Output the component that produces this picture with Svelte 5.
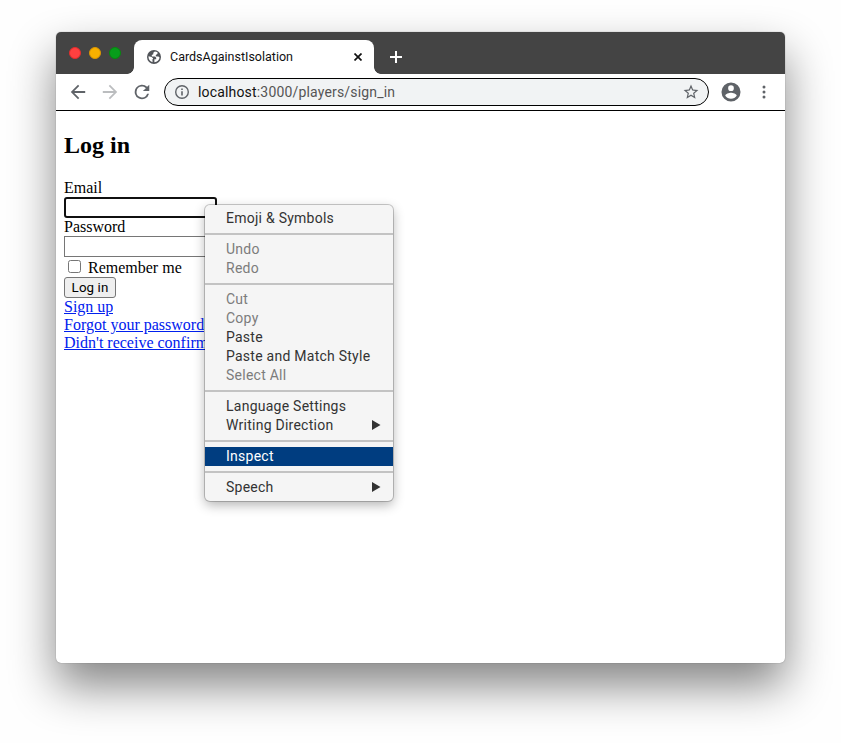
<script>
  const groups = [
    [{ label: 'Emoji & Symbols' }],
    [{ label: 'Undo', off: true }, { label: 'Redo', off: true }],
    [
      { label: 'Cut', off: true },
      { label: 'Copy', off: true },
      { label: 'Paste' },
      { label: 'Paste and Match Style' },
      { label: 'Select All', off: true }
    ],
    [{ label: 'Language Settings' }, { label: 'Writing Direction', sub: true }],
    [{ label: 'Inspect', active: true }],
    [{ label: 'Speech', sub: true }]
  ];
  const links = ['Sign up', 'Forgot your password', "Didn't receive confirm"];
</script>

<div class="desktop">
  <div class="window">
    <div class="titlebar">
      <div class="lights"><i class="red"></i><i class="yellow"></i><i class="green"></i></div>
      <div class="tab">
        <svg class="globe" width="14" height="14" viewBox="0 0 14 14">
          <circle cx="7" cy="7" r="7" fill="#515459" />
          <path d="M7.800 1.600 6.300 2.800v1.400L4.800 5v1.500h3.400l1 1.200v1.600H7.400v2.900c2.700-.1 4.900-2.100 5.200-4.700L11.400 6.400H9.300L8.600 5.200l1.900-1.500V2.300C9.700 1.800 8.700 1.600 7.800 1.600Z" fill="#fff" />
          <path d="M1.500 6.300c-.2 2.900 1.300 5.200 4 5.900V10.300L4.500 9.500H6V8.300L4.600 7Z" fill="#fff" />
        </svg>
        <span class="tab-title">CardsAgainstIsolation</span>
        <svg class="close" width="8" height="8" viewBox="0 0 8 8"><path d="M.5.5l7 7M7.500.5l-7 7" stroke="#111" stroke-width="1.700" /></svg>
      </div>
      <svg class="plus" width="12" height="12" viewBox="0 0 12 12"><path d="M6 0v12M0 6h12" stroke="#fff" stroke-width="2" /></svg>
    </div>

    <div class="toolbar">
      <svg width="18" height="18" viewBox="2 2 20 20" fill="#5f6368"><path d="M20 11H7.830l5.590-5.590L12 4l-8 8 8 8 1.410-1.410L7.830 13H20z" /></svg>
      <svg class="fwd" width="18" height="18" viewBox="2 2 20 20" fill="#bbbdbf"><path d="M4 11h12.170l-5.590-5.590L12 4l8 8-8 8-1.410-1.410L16.170 13H4z" /></svg>
      <svg class="reload" width="20" height="20" viewBox="1 1 22 22" fill="#5f6368"><path d="M17.650 6.350A8 8 0 1 0 19.730 14h-2.080A6 6 0 1 1 12 6c1.660 0 3.140.69 4.220 1.780L13 11h7V4z" /></svg>
      <div class="omnibox">
        <svg width="14" height="14" viewBox="0 0 14 14"><circle cx="7" cy="7" r="6.300" fill="none" stroke="#5f6368" stroke-width="1.400" /><path d="M7 6.200v4.300M7 3.400v1.600" stroke="#5f6368" stroke-width="1.600" /></svg>
        <span class="url"><b>localhost</b>:3000/players/sign_in</span>
        <svg class="star" width="16" height="16" viewBox="1.200 1.200 21.600 21.600" fill="#5f6368"><path d="M22 9.240l-7.190-.62L12 2 9.190 8.630 2 9.240l5.460 4.730L5.820 21 12 17.270 18.180 21l-1.630-7.030L22 9.240zM12 15.400l-3.760 2.270 1-4.280-3.320-2.880 4.380-.38L12 6.100l1.710 4.040 4.380.38-3.320 2.880 1 4.280L12 15.400z" /></svg>
      </div>
      <svg class="avatar" width="20" height="20" viewBox="1.500 1.500 21 21" fill="#5f6368"><path d="M12 2a10 10 0 1 0 0 20 10 10 0 0 0 0-20zm0 3a3 3 0 1 1 0 6 3 3 0 0 1 0-6zm0 14.200a7.200 7.200 0 0 1-6-3.220c.03-1.990 4-3.080 6-3.080s5.970 1.090 6 3.080a7.200 7.200 0 0 1-6 3.220z" /></svg>
      <svg class="dots" width="4" height="14" viewBox="0 0 4 14" fill="#5f6368"><circle cx="2" cy="2" r="1.500" /><circle cx="2" cy="7" r="1.500" /><circle cx="2" cy="12" r="1.500" /></svg>
    </div>

    <main>
      <h2>Log in</h2>
      <div class="line">Email</div>
      <div class="field focused"></div>
      <div class="line">Password</div>
      <div class="field"></div>
      <div class="remember"><span class="check"></span>Remember me</div>
      <button>Log in</button>
      {#each links as link}
        <div class="line clipped"><span class="link">{link}</span></div>
      {/each}
    </main>
  </div>

  <div class="menu">
    {#each groups as group}
      <div class="group">
        {#each group as item}
          <div class="item" class:off={item.off} class:active={item.active}>
            <span>{item.label}</span>
            {#if item.sub}
              <svg width="9" height="10" viewBox="0 0 9 10"><path d="M0 0l8.500 5L0 10z" fill="#333" /></svg>
            {/if}
          </div>
        {/each}
      </div>
    {/each}
  </div>
</div>

<style>
  .desktop {
    position: relative;
    box-sizing: border-box;
    width: 841px;
    height: 743px;
    padding: 32px 56px;
    overflow: hidden;
    background: #fefefe;
  }
  svg { display: block; flex: none; }
  .window {
    width: 729px;
    height: 631px;
    border-radius: 5px;
    background: #fff;
    box-shadow: 0 0 1px rgba(0, 0, 0, 0.5), 0 23px 46px rgba(0, 0, 0, 0.48);
  }
  .titlebar {
    display: flex;
    height: 42px;
    border-radius: 5px 5px 0 0;
    background: #444;
  }
  .lights {
    display: flex;
    gap: 8px;
    width: 65px;
    padding: 15px 0 0 13px;
  }
  .lights i {
    box-sizing: border-box;
    width: 12px;
    height: 12px;
    border-radius: 50%;
  }
  .red { background: #ff4040; border: 1px solid #e52c2c; }
  .yellow { background: #f8b000; border: 1px solid #dc9600; }
  .green { background: #079d1b; border: 1px solid #078710; }
  .tab {
    position: relative;
    display: flex;
    align-items: center;
    box-sizing: border-box;
    width: 240px;
    height: 34px;
    margin-top: 8px;
    padding: 0 12px 0 13px;
    border-radius: 8px 8px 0 0;
    background: #fff;
  }
  .tab::before,
  .tab::after {
    content: '';
    position: absolute;
    bottom: 0;
    width: 7px;
    height: 7px;
  }
  .tab::before { left: -7px; background: radial-gradient(circle at 0 0, #444 6.500px, #fff 7.200px); }
  .tab::after { right: -7px; background: radial-gradient(circle at 100% 0, #444 6.500px, #fff 7.200px); }
  .tab-title {
    margin-left: 9px;
    font: 12.500px/16px Roboto, sans-serif;
    color: #111;
    white-space: nowrap;
  }
  .close { margin-left: auto; }
  .plus { margin: 19px 0 0 16px; }
  .toolbar {
    display: flex;
    align-items: center;
    box-sizing: border-box;
    height: 37px;
    padding-left: 13px;
    border-bottom: 1px solid #000;
  }
  .fwd { margin-left: 14px; }
  .reload { margin-left: 13px; }
  .omnibox {
    display: flex;
    align-items: center;
    box-sizing: border-box;
    width: 545px;
    height: 28px;
    margin-left: 12px;
    padding: 0 9px 0 10px;
    border: 1px solid #000;
    border-radius: 14px;
    background: #f1f3f4;
  }
  .url {
    margin-left: 9px;
    font: 14px/18px Roboto, sans-serif;
    letter-spacing: 0.170px;
    color: #555;
  }
  .url b { font-weight: 400; color: #111; }
  .star { margin-left: auto; }
  .avatar { margin-left: 12px; }
  .dots { margin-left: 20.500px; }
  main {
    display: flex;
    flex-direction: column;
    align-items: flex-start;
    padding: 21px 8px;
    font: 16px/18px 'Liberation Serif', serif;
    color: #000;
  }
  h2 { margin: 0 0 20px; font-size: 24px; line-height: 27px; }
  .line { height: 18px; white-space: nowrap; }
  .clipped { max-width: 141px; overflow: hidden; }
  .field {
    box-sizing: border-box;
    width: 153px;
    height: 21px;
    border: 1px solid #767676;
    background: #fff;
  }
  .field.focused { border: 2px solid #101010; border-radius: 3px; }
  .remember {
    display: flex;
    align-items: center;
    height: 20px;
    padding-top: 1px;
    box-sizing: border-box;
  }
  .check {
    box-sizing: border-box;
    width: 13px;
    height: 13px;
    margin: -2px 7px 0 4px;
    border: 1px solid #767676;
    border-radius: 2.500px;
  }
  button {
    box-sizing: border-box;
    width: 52px;
    height: 21px;
    margin: 0;
    padding: 0;
    border: 1px solid #767676;
    border-radius: 3px;
    background: #efefef;
    font: 13.333px/17px Roboto, sans-serif;
    letter-spacing: 0.100px;
    color: #000;
  }
  .link { color: #0020ee; text-decoration: underline; }
  .menu {
    position: absolute;
    left: 205px;
    top: 205px;
    box-sizing: border-box;
    width: 188px;
    height: 296px;
    padding: 4px 0;
    border-radius: 5px;
    background: #f5f5f5;
    box-shadow: 0 0 0 1px rgba(0, 0, 0, 0.2), 0 4px 12px rgba(0, 0, 0, 0.3);
    font: 14px/19px Roboto, sans-serif;
    letter-spacing: 0.250px;
    color: #333;
  }
  .group + .group {
    margin-top: 5px;
    padding-top: 5px;
    border-top: 2px solid #c3c3c3;
  }
  .item {
    display: flex;
    align-items: center;
    justify-content: space-between;
    height: 19px;
    padding: 0 12px 0 21px;
    white-space: nowrap;
  }
  .item svg { margin-top: -1px; }
  .off { color: #7c7c7c; }
  .active { background: #003d80; color: #fff; }
</style>
